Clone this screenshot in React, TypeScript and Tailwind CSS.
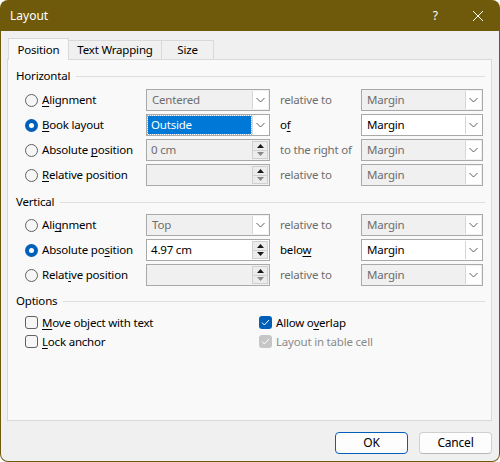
import type { ReactNode } from "react";

const font = { fontFamily: '"Noto Sans", "Segoe UI", Arial, sans-serif' };

function Chevron() {
  return (
    <svg width="9" height="6" viewBox="0 0 9 6" fill="none">
      <path d="M0.5 1 L4.5 5 L8.5 1" stroke="#5f5f5f" strokeWidth="1" />
    </svg>
  );
}

function Radio({ checked }: { checked?: boolean }) {
  return checked ? (
    <span className="flex h-[13px] w-[13px] shrink-0 items-center justify-center rounded-full bg-[#005fb8]">
      <span className="h-[5px] w-[5px] rounded-full bg-white" />
    </span>
  ) : (
    <span className="h-[13px] w-[13px] shrink-0 rounded-full border border-[#616161] bg-[#f6f6f6]" />
  );
}

function Check({ checked, disabled }: { checked?: boolean; disabled?: boolean }) {
  if (!checked)
    return <span className="h-[13px] w-[13px] shrink-0 rounded-[3px] border border-[#616161] bg-[#f6f6f6]" />;
  return (
    <span
      className={`flex h-[13px] w-[13px] shrink-0 items-center justify-center rounded-[3px] ${
        disabled ? "bg-[#c6c6c6]" : "bg-[#005fb8]"
      }`}
    >
      <svg width="9" height="7" viewBox="0 0 9 7" fill="none">
        <path d="M1 3.6 L3.4 6 L8 1" stroke="white" strokeWidth="1" />
      </svg>
    </span>
  );
}

function Combo({ value, disabled, selected, wide }: { value: string; disabled?: boolean; selected?: boolean; wide?: boolean }) {
  return (
    <div
      className={`flex h-[22px] shrink-0 items-stretch border border-[#a9a9a9] ${wide ? "w-[124px]" : "w-[122px]"} ${
        disabled ? "bg-[#f0f0f0] text-[#6d6d6d]" : "bg-white text-black"
      }`}
    >
      <div className="flex min-w-0 flex-1 items-center py-px pl-px">
        {selected ? (
          <span className="flex h-full w-full items-center bg-[#0078d7] pl-[3px] text-white outline-1 outline-dotted outline-[#e8a040]">
            {value}
          </span>
        ) : (
          <span className="pl-[4px]">{value}</span>
        )}
      </div>
      <div className="m-px flex w-[16px] items-center justify-center border-l border-[#d6d6d6] bg-white">
        <Chevron />
      </div>
    </div>
  );
}

function Spin({ value, disabled }: { value: string; disabled?: boolean }) {
  return (
    <div
      className={`flex h-[22px] w-[124px] shrink-0 items-stretch border border-[#a9a9a9] ${
        disabled ? "bg-[#f0f0f0] text-[#6d6d6d]" : "bg-white text-black"
      }`}
    >
      <div className="flex flex-1 items-center pl-[4px]">{value}</div>
      <div className="m-px flex w-[16px] flex-col border border-[#d0d0d0] bg-[#ececec]">
        <div className="flex flex-1 items-center justify-center border-b border-[#d0d0d0]">
          <svg width="7" height="4" viewBox="0 0 7 4">
            <path d="M0 4 L3.5 0 L7 4 Z" fill="#1a1a1a" />
          </svg>
        </div>
        <div className="flex flex-1 items-center justify-center">
          <svg width="7" height="4" viewBox="0 0 7 4">
            <path d="M0 0 L3.5 4 L7 0 Z" fill={disabled ? "#8a8a8a" : "#1a1a1a"} />
          </svg>
        </div>
      </div>
    </div>
  );
}

function Group({ title }: { title: string }) {
  return (
    <div className="flex h-[16px] items-center">
      <span className="text-black">{title}</span>
      <span className="ml-[6px] h-px flex-1 bg-[#dedede]" />
    </div>
  );
}

function Row({ radio, label, field, rel, relOn, margin }: { radio?: boolean; label: ReactNode; field: ReactNode; rel: ReactNode; relOn?: boolean; margin: ReactNode }) {
  return (
    <div className="flex h-[22px] items-center pl-[9px]">
      <div className="flex w-[121px] items-center gap-[4px]">
        <Radio checked={radio} />
        <span>{label}</span>
      </div>
      {field}
      <span className={`ml-[10px] w-[81px] ${relOn ? "text-black" : "text-[#6d6d6d]"}`}>{rel}</span>
      {margin}
    </div>
  );
}

const U = ({ children }: { children: ReactNode }) => <u className="underline-offset-[2px]">{children}</u>;

export default function App() {
  return (
    <div style={font} className="flex h-[462px] w-[500px] flex-col overflow-hidden rounded-[8px] bg-[#6f5a0b] text-[11.5px] tracking-[-0.2px] text-black">
      <div className="flex h-[31px] shrink-0 items-center pl-[10px] text-[12px] tracking-normal text-white">
        <span>Layout</span>
        <span className="ml-auto mr-[34px]">?</span>
        <svg className="mr-[16px]" width="12" height="12" viewBox="0 0 12 12" fill="none">
          <path d="M1 1 L11 11 M11 1 L1 11" stroke="white" strokeWidth="1" />
        </svg>
      </div>

      <div className="mx-px mb-px flex flex-1 flex-col rounded-b-[7px] bg-[#f0f0f0] pl-[6px] pr-[7px] pt-[7px]">
        <div className="relative z-10 flex h-[21px] items-end pl-px">
          <div className="-mb-px flex h-[22px] w-[61px] items-center justify-center border border-b-0 border-[#d9d9d9] bg-[#f9f9f9]">
            Position
          </div>
          <div className="flex h-[19px] w-[93px] items-center justify-center border border-l-0 border-b-0 border-[#d9d9d9] bg-[#f0f0f0]">
            Text Wrapping
          </div>
          <div className="flex h-[19px] w-[52px] items-center justify-center border border-l-0 border-b-0 border-[#d9d9d9] bg-[#f0f0f0]">
            Size
          </div>
        </div>

        <div className="flex h-[362px] flex-col border border-[#d9d9d9] bg-[#f9f9f9] pl-[8px] pr-[6px] pt-[8px]">
          <Group title="Horizontal" />
          <div className="mt-[5px] flex flex-col gap-[3px]">
            <Row
              label={<><U>A</U>lignment</>}
              field={<Combo value="Centered" disabled wide />}
              rel="relative to"
              margin={<Combo value="Margin" disabled />}
            />
            <Row
              radio
              label={<><U>B</U>ook layout</>}
              field={<Combo value="Outside" selected wide />}
              rel={<>o<U>f</U></>}
              relOn
              margin={<Combo value="Margin" />}
            />
            <Row
              label={<>Absolute <U>p</U>osition</>}
              field={<Spin value="0 cm" disabled />}
              rel="to the right of"
              margin={<Combo value="Margin" disabled />}
            />
            <Row
              label={<><U>R</U>elative position</>}
              field={<Spin value="" disabled />}
              rel="relative to"
              margin={<Combo value="Margin" disabled />}
            />
          </div>

          <div className="mt-[8px]">
            <Group title="Vertical" />
          </div>
          <div className="mt-[4px] flex flex-col gap-[3px]">
            <Row
              label={<>Ali<U>g</U>nment</>}
              field={<Combo value="Top" disabled wide />}
              rel="relative to"
              margin={<Combo value="Margin" disabled />}
            />
            <Row
              radio
              label={<>Absolute po<U>s</U>ition</>}
              field={<Spin value="4.97 cm" />}
              rel={<>belo<U>w</U></>}
              relOn
              margin={<Combo value="Margin" />}
            />
            <Row
              label={<>Relat<U>i</U>ve position</>}
              field={<Spin value="" disabled />}
              rel="relative to"
              margin={<Combo value="Margin" disabled />}
            />
          </div>

          <div className="mt-[7px]">
            <Group title="Options" />
          </div>
          <div className="mt-[4px] grid grid-cols-[234px_1fr] pl-[9px]">
            <div className="flex h-[19px] items-center gap-[4px]">
              <Check />
              <span><U>M</U>ove object with text</span>
            </div>
            <div className="flex h-[19px] items-center gap-[4px]">
              <Check checked />
              <span>Allow o<U>v</U>erlap</span>
            </div>
            <div className="flex h-[19px] items-center gap-[4px]">
              <Check />
              <span><U>L</U>ock anchor</span>
            </div>
            <div className="flex h-[19px] items-center gap-[4px] text-[#8a8a8a]">
              <Check checked disabled />
              <span>Layout in table cell</span>
            </div>
          </div>
        </div>

        <div className="mt-[11px] flex justify-end gap-[11px]">
          <button type="button" className="h-[22px] w-[73px] rounded-[4px] border border-[#005fb8] bg-[#fdfdfd] text-[12px]">
            OK
          </button>
          <button type="button" className="h-[22px] w-[73px] rounded-[4px] border border-[#d0d0d0] border-b-[#b8b8b8] bg-[#fdfdfd] text-[12px]">
            Cancel
          </button>
        </div>
      </div>
    </div>
  );
}
